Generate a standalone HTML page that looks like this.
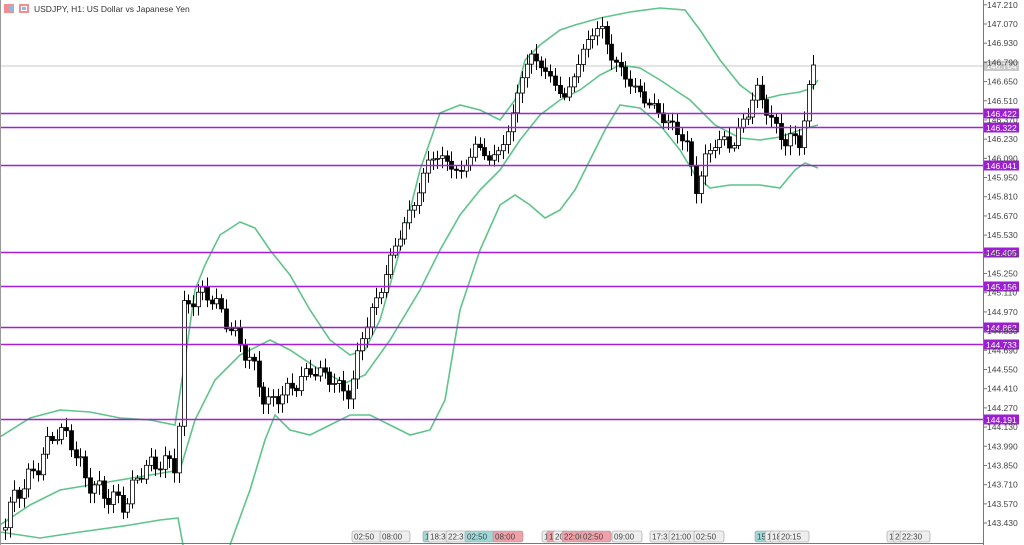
<!DOCTYPE html><html><head><style>
body{margin:0;background:#fff;width:1024px;height:545px;overflow:hidden;font-family:"Liberation Sans",sans-serif}
svg{position:absolute;left:0;top:0}
</style></head><body>
<svg id="s" width="1024" height="545" xmlns="http://www.w3.org/2000/svg" font-family="Liberation Sans, sans-serif">
<rect x="0" y="0" width="1024" height="545" fill="#fff"/>
<line x1="0" y1="66" x2="983" y2="66" stroke="#c8c8c8" stroke-width="1"/>
<g id="bands" fill="none" stroke="#5ec48a" stroke-width="1.6"></g>
<g id="candles"></g>
<g id="hl"></g>
<line x1="983.5" y1="0" x2="983.5" y2="545" stroke="#777"/>
<line x1="0" y1="543.5" x2="983" y2="543.5" stroke="#777"/>
<line x1="0.5" y1="0" x2="0.5" y2="545" stroke="#999"/>
<g id="ax" font-size="8.5" fill="#444"></g>
<g id="tl" font-size="8" fill="#444"></g>
<rect x="4" y="4" width="10" height="9" fill="#ef8f8f"/><rect x="9" y="5" width="4" height="7" fill="#8fb8e8"/>
<rect x="19" y="4" width="10" height="9" fill="#ef8f8f"/><rect x="21" y="6" width="6" height="5" fill="#fff"/><rect x="22" y="7" width="4" height="3" fill="#8fb8e8"/>
<text x="34" y="12" font-size="8.5" fill="#333">USDJPY, H1:  US Dollar vs Japanese Yen</text>
</svg>
<script>
(function(){
var NS="http://www.w3.org/2000/svg";
function el(p,t,a,txt){var e=document.createElementNS(NS,t);for(var k in a)e.setAttribute(k,a[k]);if(txt)e.textContent=txt;p.appendChild(e);return e;}
function Y(p){return 24+(147.07-p)*137.1;}
var ax=document.getElementById('ax');
for(var i=0;i<28;i++){var p=147.21-i*0.14;var y=Y(p);
 el(ax,'line',{x1:983,x2:987,y1:y,y2:y,stroke:'#777'});
 el(ax,'text',{x:987,y:y+3},p.toFixed(3));}
var hl=document.getElementById('hl');
[146.422,146.322,146.041,145.405,145.156,144.862,144.733,144.191].forEach(function(p){var y=Math.round(Y(p))+.5;
 el(hl,'line',{x1:0,x2:983,y1:y,y2:y,stroke:'#a41fd6','stroke-width':1.5});
 el(hl,'rect',{x:984,y:y-5,width:35,height:10,fill:'#9b1fd0'});
 el(hl,'text',{x:986,y:y+3.5,'font-size':8.5,fill:'#fff'},p.toFixed(3));});
el(hl,'rect',{x:984,y:61,width:35,height:10,fill:'#c8c8c8'});
el(hl,'text',{x:986,y:69,'font-size':8.5,fill:'#fff'},'146.764');
var bands=document.getElementById('bands');
function pl(pts){el(bands,'polyline',{points:pts.map(function(a){return a.join(',')}).join(' ')});}
pl([[0,437],[30,418],[60,410],[90,412],[120,418],[150,420],[175,425],[185,360],[195,290],[205,265],[220,235],[240,222],[255,228],[270,250],[290,275],[310,310],[330,340],[350,355],[365,350],[380,320],[400,250],[420,170],[440,113],[460,105],[480,110],[500,120],[515,100],[525,60],[540,45],[560,30],[575,25],[600,18],[630,12],[660,8],[685,10],[700,30],[720,60],[740,85],[760,100],[780,95],[800,92],[812,88],[818,80]]);
pl([[0,525],[30,505],[60,490],[90,485],[120,480],[150,475],[180,470],[195,420],[215,380],[240,355],[270,340],[290,350],[320,370],[345,383],[365,375],[390,340],[420,290],[440,250],[460,215],[480,190],[500,170],[520,140],[540,115],[560,100],[580,90],[600,75],[620,65],[640,68],[660,80],[690,100],[715,125],[740,138],[760,140],[780,137],[800,130],[818,125]]);
pl([[0,532],[40,538],[80,532],[130,525],[160,520],[178,518],[183,545]]);
pl([[230,545],[250,490],[265,440],[275,415],[290,430],[310,435],[330,425],[350,415],[370,415],[390,425],[410,435],[430,430],[445,400],[460,310],[480,250],[500,205],[515,195],[530,205],[545,218],[560,210],[575,190],[590,160],[605,130],[620,105],[640,108],[660,125],[680,150],[695,175],[710,188],[730,185],[760,185],[780,188],[795,170],[805,163],[818,168]]);
var W=[[5,530],[20,495],[40,470],[60,430],[75,440],[90,480],[110,495],[130,505],[145,470],[165,462],[182,465],[188,310],[200,295],[215,295],[230,320],[245,345],[260,370],[270,405],[285,395],[300,385],[315,370],[330,375],[345,388],[355,395],[365,340],[385,290],[400,245],[420,200],[435,155],[450,160],[465,175],[480,145],[495,160],[505,150],[515,125],[525,80],[535,55],[545,65],[560,85],[570,100],[580,70],[595,35],[605,25],[615,55],[625,70],[640,90],[655,105],[670,120],[690,140],[700,190],[710,160],[720,140],[735,145],[745,130],[760,90],[770,105],[780,130],[790,140],[805,140],[812,100],[818,70]];
function f(x){for(var i=0;i<W.length-1;i++){if(x<=W[i+1][0]){var a=W[i],b=W[i+1];return a[1]+(b[1]-a[1])*(x-a[0])/(b[0]-a[0]);}}return W[W.length-1][1];}
var cg=document.getElementById('candles');var prev=f(5);
for(var x=5;x<=818;x+=4.7){var c=f(x+4.7)+Math.sin(x*1.7)*6+Math.sin(x*0.37)*4;
 if(x>812)c=65;
 var o=prev,tp=Math.min(o,c),bt=Math.max(o,c);var hi=tp-3-Math.abs(Math.sin(x*2.3))*7,lo=bt+3+Math.abs(Math.cos(x*1.3))*7;
 var cx=Math.round(x)+.5;
 el(cg,'line',{x1:cx,x2:cx,y1:hi,y2:lo,stroke:'#000'});
 el(cg,'rect',{x:cx-2,y:tp,width:4,height:Math.max(1,bt-tp),fill:c<o?'#fff':'#000',stroke:'#000','stroke-width':.8});
 prev=c;}
var tl=document.getElementById('tl');
[[352,'02:50','#eee'],[380,'08:00','#eee'],[423,'1','#9fd8d8'],[428,'18:3','#eee'],[446,'22:3','#eee'],[465,'02:50','#9fd8d8'],[493,'08:00','#f0a0a8'],[542,'1','#eee'],[547,'1','#f0a0a8'],[553,'20','#eee'],[562,'22:00','#f0a0a8'],[581,'02:50','#f0a0a8'],[612,'09:00','#eee'],[650,'17:3','#eee'],[669,'21:00','#eee'],[694,'02:50','#eee'],[755,'15','#9fd8d8'],[765,'1','#eee'],[770,'18','#eee'],[779,'20:15','#eee'],[887,'1','#eee'],[893,'2','#eee'],[900,'22:30','#eee']].forEach(function(t){
 var w=t[1].length*5+5;el(tl,'rect',{x:t[0],y:531,width:w,height:11,fill:t[2],stroke:'#999','stroke-width':.6,rx:2});
 el(tl,'text',{x:t[0]+2,y:539.5},t[1]);});
})();
</script>
</body></html>
